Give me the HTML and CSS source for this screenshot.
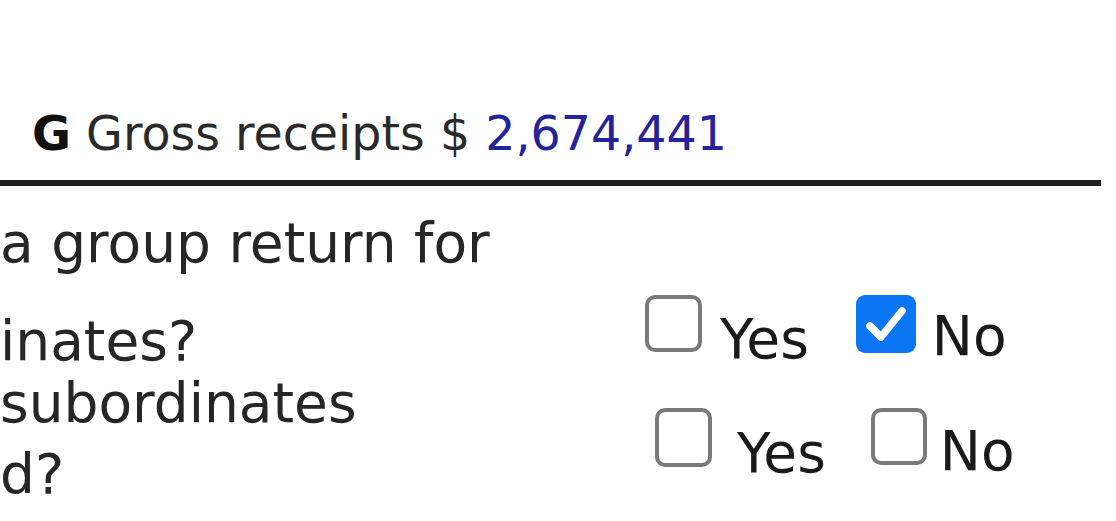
FILE: index.html
```html
<!DOCTYPE html>
<html lang="en">
<head>
<meta charset="utf-8">
<title>Gross receipts</title>
<link rel="stylesheet" href="styles.css">
</head>
<body>
<div class="page">
  <div class="receipts"><b class="letter">G</b> Gross receipts $ <span class="amount">2,674,441</span></div>
  <div class="rule"></div>

  <div class="q q-a">
    <div class="qtext">
      <div class="line l1">a group return for</div>
      <div class="line l2">inates?</div>
    </div>
    <div class="opts">
      <div class="opt opt-1">
        <span class="box"></span>
        <span class="lbl">Yes</span>
      </div>
      <div class="opt opt-2">
        <span class="box checked">
          <svg viewBox="0 0 60 58" width="60" height="58" aria-hidden="true"><polyline points="14,31 25,42 46,16" fill="none" stroke="#fff" stroke-width="7.5" stroke-linecap="round" stroke-linejoin="round"/></svg>
        </span>
        <span class="lbl">No</span>
      </div>
    </div>
  </div>

  <div class="q q-b">
    <div class="qtext">
      <div class="line l3">subordinates</div>
      <div class="line l4">d?</div>
    </div>
    <div class="opts">
      <div class="opt opt-1">
        <span class="box"></span>
        <span class="lbl">Yes</span>
      </div>
      <div class="opt opt-2">
        <span class="box"></span>
        <span class="lbl">No</span>
      </div>
    </div>
  </div>
</div>
</body>
</html>
```
FILE: styles.css
```css
html, body {
  margin: 0;
  padding: 0;
  background: #ffffff;
}

body {
  width: 1116px;
  height: 521px;
  overflow: hidden;
  font-family: "DejaVu Sans", Verdana, sans-serif;
  color: #1c1c1c;
}

.page {
  display: flex;
  flex-direction: column;
}

.receipts {
  padding: 110px 0 0 32px;
  font-size: 47.5px;
  line-height: 47.5px;
  white-space: nowrap;
  color: #2a2a2a;
}

.letter {
  font-weight: bold;
  color: #111;
}

.amount {
  color: #23239c;
}

.rule {
  margin-top: 22.5px;
  width: 1101px;
  height: 6px;
  background: #1e1e1e;
}

.q {
  display: flex;
  align-items: flex-start;
  font-size: 55px;
  line-height: 54px;
}

.q-a {
  margin-top: 30px;
}

.q-b {
  margin-top: 8px;
}

.qtext {
  width: 645px;
  flex: none;
  display: flex;
  flex-direction: column;
}

.line {
  white-space: nowrap;
  color: #262626;
}

.l2 { margin-top: 44px; }
.l4 { margin-top: 17px; }

.opts {
  display: flex;
  align-items: flex-start;
}

.q-a .opts { padding-top: 79px; }
.q-b .opts { padding-top: 32px; padding-left: 10px; }

.opt {
  display: flex;
  align-items: flex-start;
}

.box {
  display: block;
  flex: none;
  box-sizing: border-box;
  width: 57px;
  height: 57px;
  border: 4px solid #7a7a7a;
  border-radius: 10px;
  background: #fff;
}

.box.checked {
  width: 60px;
  height: 58px;
  border: none;
  border-radius: 9px;
  background: #0b76f4;
}

.box.checked svg {
  display: block;
}

.lbl {
  display: block;
  color: #1a1a1a;
}

.q-a .opt-1 .lbl { margin-left: 18px; margin-top: 17px; }
.q-a .opt-2 { margin-left: 47px; }
.q-a .opt-2 .lbl { margin-left: 16px; margin-top: 14px; }

.q-b .opt-1 .box { height: 59px; }
.q-b .opt-1 .lbl { margin-left: 25px; margin-top: 18px; }
.q-b .opt-2 { margin-left: 45px; }
.q-b .opt-2 .box { width: 56px; }
.q-b .opt-2 .lbl { margin-left: 13px; margin-top: 16px; }
```
